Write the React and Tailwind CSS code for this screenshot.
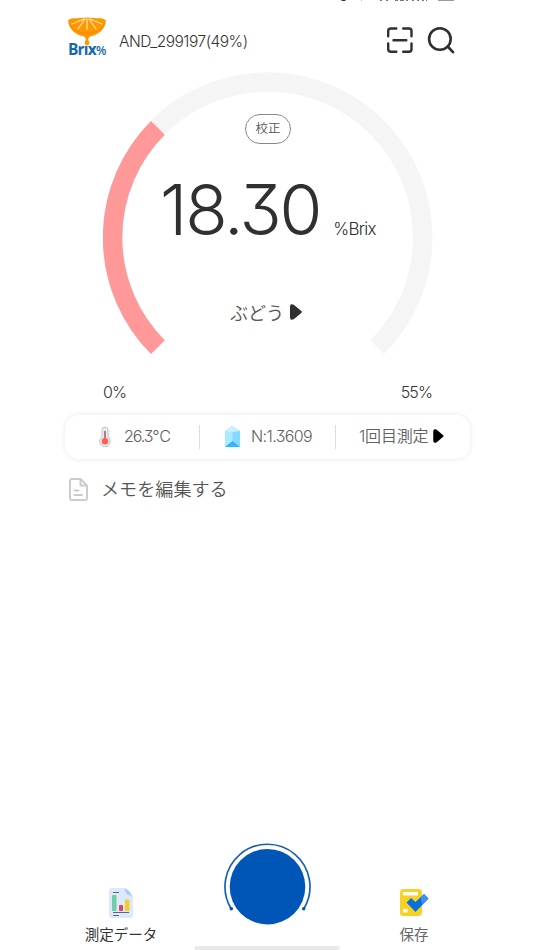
import React from 'react'

const latin = "font-['Inter','Noto_Sans_CJK_JP',sans-serif]"
const japanese = "font-['Noto_Sans_CJK_JP',sans-serif]"

function BrixLogo() {
  return (
    <div className="relative w-10 h-10">
      <svg viewBox="0 0 40 40" className="w-10 h-10">
        <path d="M1 3.5C4 .5 8 1.5 12 1C17 .3 23 .3 28 1C32 1.5 36 .5 39 3.5C38 13 31 18 23 19.5C21.5 20 21 22 21 24H19C19 22 18.5 20 17 19.5C9 18 2 13 1 3.5Z" fill="#ff9800" />
        <path d="M2 6C5 13 11 16 20 16S35 13 38 6" fill="none" stroke="#f98500" strokeWidth="1" />
        <g stroke="#ffe2a0" strokeWidth="1.3" strokeLinecap="round">
          <path d="M17 2L5 7M18 2L11 12M20 2V12.5M22 2L29 12M23 2L35 7" />
        </g>
        <path d="M20 21C18 24 17.5 25 17.8 26.2A2.2 2.2 0 0 0 22.2 26.2C22.5 25 22 24 20 21Z" fill="#ff9800" />
      </svg>
      <div className="absolute left-px top-[25px] flex items-baseline leading-[15px] text-[#1769aa]">
        <span className="font-['Open_Sans',sans-serif] font-bold text-[15.5px] tracking-[-0.8px]">Brıx</span>
        <span className="font-['Open_Sans',sans-serif] font-semibold text-[12px]">%</span>
      </div>
    </div>
  )
}

function ScanIcon() {
  return (
    <svg viewBox="0 0 28 28" className="w-7 h-7" fill="none" stroke="#2d2f31" strokeWidth="2.4" strokeLinecap="round">
      <path d="M10.3 2.5H5Q2.2 2.5 2.2 5V10.3M17.2 2.5H23Q25.5 2.5 25.5 5V10.3M2.2 17.5V23Q2.2 25.8 5 25.8H10.3M17.2 25.8H23Q25.5 25.8 25.5 23V17.5M7.5 14.2H20.3" />
    </svg>
  )
}

function SearchIcon() {
  return (
    <svg viewBox="0 0 28 28" className="w-7 h-7" fill="none" stroke="#2d2f31" strokeWidth="2.6" strokeLinecap="round">
      <circle cx="12.9" cy="13" r="10.8" />
      <path d="M20.7 20.5L26 26.2" />
    </svg>
  )
}

function Arrow({ className, color }) {
  return (
    <svg viewBox="0 0 12 16" className={className} fill={color}>
      <path d="M0 2.5Q0 0 2.3 .3Q3.5 .4 5 1.8L11 6.8Q12.8 8 11 9.2L5 14.2Q3.5 15.6 2.3 15.7Q0 16 0 13.5Z" />
    </svg>
  )
}

function StatusBar() {
  return (
    <div className="h-[2px] shrink-0 pl-[340px]">
      <svg viewBox="0 0 120 2" className="w-[120px] h-[2px]" fill="#333">
        <path d="M1 0H6L5 1H2Z" />
        <path d="M21 0h1v.6h-1zM40 0h2v1h-2zM46 0h2v1h-2zM55 0h3v1h-3zM60 0h4v1h-4zM66 0h2v1h-2zM72 0h2v1h-2zM77 0h2v1h-2zM82 0h2v1h-2zM86 0h1v1h-1zM98 0h16v.8h-16z" opacity=".65" />
      </svg>
    </div>
  )
}

function Gauge() {
  return (
    <section className="relative mt-[12px] ml-[103px] w-[330px] h-[283px] shrink-0 flex flex-col items-center">
      <svg viewBox="0 0 330 283" className="absolute inset-0 w-[330px] h-[283px]" fill="none" strokeWidth="19.5">
        <path d="M54.9 275.1A155.2 155.2 0 1 1 274.1 275.1" stroke="#f5f5f5" />
        <path d="M54.9 275.1A155.2 155.2 0 0 1 54.9 55.9" stroke="#ff9999" />
      </svg>
      <button className={`${japanese} relative mt-[42px] w-[46px] h-[30px] rounded-full border border-[#888] text-[12.5px] leading-none font-[350] text-[#555] pb-px`}>
        校正
      </button>
      <div className={`${latin} relative mt-[20px] h-[92px] self-start pl-[57px] flex items-baseline text-[#2e3032] whitespace-nowrap`}>
        <span className="text-[69.5px] leading-[92px] tracking-[-2.2px] font-[310] [font-feature-settings:'cv09']">18.30</span>
        <span className="ml-[13px] text-[17px] tracking-[-0.75px] font-[350]">%Brix</span>
      </div>
      <div className={`${japanese} relative mt-[42px] flex items-center h-[28px] self-start ml-[127px] text-[18px] font-[350] text-[#555]`}>
        <span>ぶどう</span>
        <Arrow className="w-[12px] h-4 ml-[6px]" color="#2e3032" />
      </div>
    </section>
  )
}

function Thermometer() {
  return (
    <svg viewBox="0 0 14 21" className="w-[14px] h-[21px]">
      <path d="M4 4a3 3 0 0 1 6 0V11a5.3 5.3 0 1 1-6 0Z" fill="#e7ebf3" stroke="#bec5d1" strokeWidth="1" />
      <path d="M7 5V15" stroke="#bd5555" strokeWidth="1.6" />
      <circle cx="7" cy="15.3" r="3.2" fill="#ff6047" />
      <path d="M11 5h1.5M11 8h1.5M11 11h1.5" stroke="#c6cbd5" strokeWidth=".7" />
    </svg>
  )
}

function Prism() {
  return (
    <svg viewBox="0 0 15 21" className="w-[15px] h-[21px]">
      <path d="M0 5L7.5 0L15 5V21H0Z" fill="#83d9ff" />
      <path d="M0 5L7.5 0V16L0 21Z" fill="#acebff" />
      <path d="M0 5L7.5 0L15 5L7.5 6Z" fill="#c8f2ff" />
      <path d="M0 21L7.5 15L15 21Z" fill="#2fb6fb" />
    </svg>
  )
}

function Readings() {
  return (
    <section className={`${latin} ml-[65px] mt-[11px] w-[405px] h-[44px] shrink-0 rounded-[14px] bg-white shadow-[0_0_4px_1px_rgba(0,0,0,0.07)] flex items-center text-[16px] leading-6 font-[350] text-[#606060] whitespace-nowrap`}>
      <div className="w-[134px] pl-[33px] pb-[2px] flex items-center">
        <Thermometer />
        <span className="ml-[12px] tracking-[-1.1px] [font-feature-settings:'cv09']">26.3℃</span>
      </div>
      <div className="w-px h-6 bg-[#ddd]" />
      <div className="w-[135px] pl-[25px] pb-[2px] flex items-center">
        <Prism />
        <span className="ml-[11px] tracking-[-0.6px] [font-feature-settings:'cv09']">N:1.3609</span>
      </div>
      <div className="w-px h-6 bg-[#ddd]" />
      <div className="pl-[23px] pb-[2px] flex items-center">
        <span className="tracking-[-0.2px]">1回目測定</span>
        <Arrow className="w-[11px] h-[14px] ml-[5px]" color="#000" />
      </div>
    </section>
  )
}

function MemoIcon() {
  return (
    <svg viewBox="0 0 19 23" className="w-[19px] h-[23px]" fill="none" stroke="#ccc" strokeWidth="2" strokeLinecap="round" strokeLinejoin="round">
      <path d="M3 1H11.5L18 7.5V20Q18 22 16 22H3Q1 22 1 20V3Q1 1 3 1ZM11.5 1V7.5H18M5.5 12.5H9.5M5.5 17H13" />
    </svg>
  )
}

function DataIcon() {
  return (
    <svg viewBox="0 0 24 30" className="w-6 h-[30px]">
      <path d="M3 0H15L24 9V27Q24 30 21 30H3Q0 30 0 27V3Q0 0 3 0Z" fill="#dce9fb" />
      <path d="M15 0Q20 1 24 9Q22 7 19 7Q17 6 15 0Z" fill="#a9cdfb" />
      <path d="M4 4.5H10M4 24.5H20M4 27.5H10" stroke="#59677a" strokeWidth="1" />
      <rect x="3" y="7" width="4.5" height="16" rx="1" fill="#71cca7" />
      <rect x="10" y="17" width="4" height="6" rx="1" fill="#dc4863" />
      <rect x="16" y="11.5" width="4.5" height="11.5" rx="1" fill="#f5cd28" />
    </svg>
  )
}

function SaveIcon() {
  return (
    <svg viewBox="0 0 29 27" className="w-[29px] h-[27px]">
      <rect width="22" height="27" rx="3.5" fill="#f8d126" />
      <path d="M3 3H18V6.5H3ZM3 20H7.5V23.5H3Z" fill="#fff" />
      <path d="M6.5 13.5L11 9L15.5 13L24 5L28.5 9.5L15.5 23Z" fill="#0870dd" />
      <path d="M20.5 8.3L24 5L28.5 9.5L22.2 16.1Z" fill="#3f91f7" />
    </svg>
  )
}

function BottomBar() {
  return (
    <footer className={`${japanese} h-[108px] shrink-0 flex items-start text-[14.5px] leading-5`}>
      <button className="ml-[84px] mt-[46px] w-[74px] flex flex-col items-center text-[#333] whitespace-nowrap">
        <DataIcon />
        <span className="mt-[6px]">測定データ</span>
      </button>
      <div className="ml-[36px] w-[146px] h-[108px] flex flex-col items-center justify-between">
        <svg viewBox="0 0 88 85" className="w-[88px] h-[85px]">
          <circle cx="44.5" cy="44.7" r="37.8" fill="#0056b7" />
          <path d="M8 66.5A42.5 42.5 0 1 1 81 66.5" fill="none" stroke="#1761b5" strokeWidth="1.7" />
          <circle cx="8.3" cy="66.8" r="1.8" fill="#0056b7" />
          <circle cx="80.7" cy="66.8" r="1.8" fill="#0056b7" />
        </svg>
        <div className="w-[146px] h-1 rounded-full bg-[#e9e9e9]" />
      </div>
      <button className="ml-[59px] mt-[47px] w-[30px] flex flex-col items-center text-[#666] whitespace-nowrap">
        <SaveIcon />
        <span className="mt-[8px]">保存</span>
      </button>
    </footer>
  )
}

export default function App() {
  return (
    <main className="w-[534px] h-[950px] bg-white overflow-hidden flex flex-col">
      <StatusBar />
      <header className="h-[58px] shrink-0 pl-[67px] pt-[15px] flex items-start">
        <BrixLogo />
        <span className={`${latin} ml-[12px] mt-[13px] w-[267px] text-[15.5px] leading-6 tracking-[-0.5px] font-[350] text-[#333]`}>
          AND_299197(49%)
        </span>
        <div className="flex gap-[13px] mt-[9px]">
          <ScanIcon />
          <SearchIcon />
        </div>
      </header>
      <Gauge />
      <div className={`${latin} mt-[25px] ml-[103px] w-[329px] flex justify-between text-[16px] leading-6 tracking-[-0.9px] font-[350] text-[#333]`}>
        <span>0%</span>
        <span>55%</span>
      </div>
      <Readings />
      <div className={`${japanese} ml-[69px] mt-[16px] flex items-center gap-[13px] h-[28px] text-[18.1px] font-[350] text-[#555]`}>
        <MemoIcon />
        <span>メモを編集する</span>
      </div>
      <div className="flex-1" />
      <BottomBar />
    </main>
  )
}
